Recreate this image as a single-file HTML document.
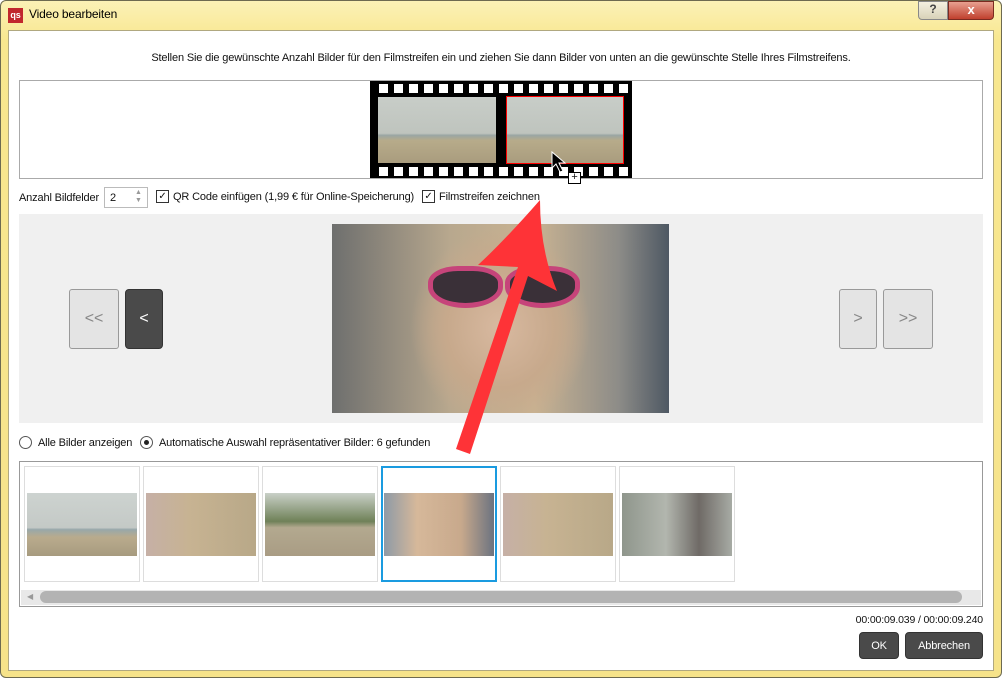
<!DOCTYPE html>
<html><head><meta charset="utf-8"><style>
*{margin:0;padding:0;box-sizing:border-box}
body{width:1002px;height:678px;overflow:hidden;font-family:"Liberation Sans",sans-serif;font-size:11px;letter-spacing:-0.15px;color:#111;background:#fff;position:relative}
.abs{position:absolute}
.win{left:0;top:0;width:1002px;height:678px;background:linear-gradient(#fbf1b6,#f8e78f 40px,#f6e38a);border:1px solid #6d6a50;border-radius:6px}
.client{left:8px;top:30px;width:986px;height:641px;background:#fff;border:1px solid #b0a880}
.btn{background:#e4e4e4;border:1px solid #999;border-radius:3px;color:#888;font-size:16px;text-align:center}
.dark{background:#4a4a4a;border:1px solid #333;border-radius:4px;color:#fff;text-align:center}
.th{border:1px solid #ddd;background:#fff;width:116px;height:116px;top:466px}
.th div{position:absolute;left:2px;top:26px;width:110px;height:63px}
</style></head><body>
<div class="abs win"></div>
<div class="abs" style="left:8px;top:8px;width:15px;height:15px;background:#c1272d;color:#fff;font-size:9px;font-weight:bold;line-height:15px;text-align:center">qs</div>
<div class="abs" style="left:29px;top:7px;font-size:12px;color:#000">Video bearbeiten</div>
<div class="abs" style="left:918px;top:1px;width:30px;height:19px;border:1px solid #888;border-radius:0 0 0 4px;background:linear-gradient(#f4f0e0,#d8d2b8);text-align:center;font-size:12px;font-weight:bold;color:#444">?</div>
<div class="abs" style="left:948px;top:1px;width:46px;height:19px;border:1px solid #7a2a20;border-radius:0 0 4px 0;background:linear-gradient(#e8a090,#c0402e);text-align:center;font-size:13px;font-weight:bold;color:#fff">x</div>
<div class="abs client"></div>
<div class="abs" style="left:0;top:52px;width:1002px;text-align:center;font-size:11px">Stellen Sie die gewünschte Anzahl Bilder für den Filmstreifen ein und ziehen Sie dann Bilder von unten an die gewünschte Stelle Ihres Filmstreifens.</div>
<div class="abs" style="left:19px;top:80px;width:964px;height:99px;border:1px solid #aaa"></div>
<div class="abs" style="left:370px;top:81px;width:262px;height:97px;background:#000"></div>
<div class="abs" style="left:379px;top:84px;width:250px;height:9px;background:repeating-linear-gradient(90deg,#fff 0 9px,#000 9px 15px)"></div>
<div class="abs" style="left:379px;top:167px;width:250px;height:9px;background:repeating-linear-gradient(90deg,#fff 0 9px,#000 9px 15px)"></div>
<div class="abs" style="left:378px;top:97px;width:118px;height:66px;background:linear-gradient(#c8cdc8 0,#bfc4be 55%,#9aa6a4 58%,#b7ab8a 66%,#a99c7e)"></div>
<div class="abs" style="left:506px;top:96px;width:118px;height:68px;border:1px solid #f00;background:linear-gradient(#c8cdc8 0,#bfc4be 55%,#9aa6a4 58%,#b7ab8a 66%,#a99c7e)"></div>
<div class="abs" style="left:568px;top:172px;width:13px;height:12px;background:#fff;border:1px solid #000;font-size:11px;line-height:9px;text-align:center">+</div>
<div class="abs" style="left:19px;top:192px">Anzahl Bildfelder</div>
<div class="abs" style="left:104px;top:187px;width:44px;height:21px;border:1px solid #bbb;padding:4px 0 0 5px">2</div>
<div class="abs" style="left:135px;top:189px;color:#999;font-size:7px;line-height:8px">▲<br>▼</div>
<div class="abs" style="left:156px;top:190px;width:13px;height:13px;border:1px solid #333;font-size:10px;line-height:11px;text-align:center">✓</div>
<div class="abs" style="left:173px;top:191px">QR Code einfügen (1,99 € für Online-Speicherung)</div>
<div class="abs" style="left:422px;top:190px;width:13px;height:13px;border:1px solid #333;font-size:10px;line-height:11px;text-align:center">✓</div>
<div class="abs" style="left:439px;top:191px">Filmstreifen zeichnen</div>
<div class="abs" style="left:19px;top:214px;width:964px;height:209px;background:#f0f0f0"></div>
<div class="abs" style="left:332px;top:224px;width:337px;height:189px;background:radial-gradient(ellipse 90px 100px at 50% 55%,#d8b9a0,#c7a98c 60%,transparent 100%),linear-gradient(90deg,#6e6f6e,#b8a88e 35%,#c9b392 60%,#8d8c88 85%,#4e5863)"></div>
<div class="abs" style="left:428px;top:266px;width:75px;height:42px;border-radius:40% 40% 50% 50%;background:#3a3038;border:5px solid #c6447a"></div>
<div class="abs" style="left:505px;top:266px;width:75px;height:42px;border-radius:40% 40% 50% 50%;background:#3a3038;border:5px solid #c6447a"></div>
<div class="abs btn" style="left:69px;top:289px;width:50px;height:60px;line-height:58px">&lt;&lt;</div>
<div class="abs dark" style="left:125px;top:289px;width:38px;height:60px;line-height:58px;font-size:16px">&lt;</div>
<div class="abs btn" style="left:839px;top:289px;width:38px;height:60px;line-height:58px">&gt;</div>
<div class="abs btn" style="left:883px;top:289px;width:50px;height:60px;line-height:58px">&gt;&gt;</div>
<div class="abs" style="left:19px;top:436px;width:13px;height:13px;border:1px solid #555;border-radius:50%"></div>
<div class="abs" style="left:38px;top:437px">Alle Bilder anzeigen</div>
<div class="abs" style="left:140px;top:436px;width:13px;height:13px;border:1px solid #555;border-radius:50%"><div style="margin:3px;width:5px;height:5px;border-radius:50%;background:#222"></div></div>
<div class="abs" style="left:159px;top:437px">Automatische Auswahl repräsentativer Bilder: 6 gefunden</div>
<div class="abs" style="left:19px;top:461px;width:964px;height:146px;border:1px solid #999"></div>
<div class="abs th" style="left:24px"><div style="background:linear-gradient(#cdd3d0,#c4c9c6 55%,#98a8aa 58%,#b9ab8d 70%,#a79b7f)"></div></div>
<div class="abs th" style="left:143px"><div style="background:linear-gradient(90deg,#c6b0a6,#c7b392 40%,#b8a888)"></div></div>
<div class="abs th" style="left:262px"><div style="background:linear-gradient(#c9d0c8,#6f8158 45%,#b3a98f 55%,#a99c84)"></div></div>
<div class="abs th" style="left:381px;border:2px solid #1a9be0"><div style="left:1px;top:25px;background:linear-gradient(90deg,#8e9aa6,#d6b89a 30%,#c8a98c 70%,#6c7380)"></div></div>
<div class="abs th" style="left:500px"><div style="background:linear-gradient(90deg,#c6b0a6,#c7b392 40%,#b8a888)"></div></div>
<div class="abs th" style="left:619px"><div style="background:linear-gradient(90deg,#8f968c,#b2b6ae 40%,#6f6a66 70%,#a7aba4)"></div></div>
<div class="abs" style="left:21px;top:590px;width:960px;height:15px;background:#e8e8e8"></div>
<div class="abs" style="left:27px;top:592px;color:#999;font-size:8px">◀</div>
<div class="abs" style="left:40px;top:591px;width:922px;height:12px;background:#b3b3b3;border-radius:6px"></div>
<div class="abs" style="left:846px;top:614px;width:137px;text-align:right;font-size:10.5px">00:00:09.039 / 00:00:09.240</div>
<div class="abs dark" style="left:859px;top:632px;width:40px;height:27px;line-height:27px">OK</div>
<div class="abs dark" style="left:905px;top:632px;width:78px;height:27px;line-height:27px">Abbrechen</div>
<svg class="abs" style="left:0;top:0" width="1002" height="678"><path d="M540,200 Q505,240 478,265 L518,267 L456,449 L470,454 L528,276 L557,291 Q540,250 540,200 Z" fill="#fe3337"/>
<path d="M552,152 L552,168 L556,164 L560,172 L563,171 L559,163 L565,163 Z" fill="#000" stroke="#fff" stroke-width="1"/></svg>
</body></html>
